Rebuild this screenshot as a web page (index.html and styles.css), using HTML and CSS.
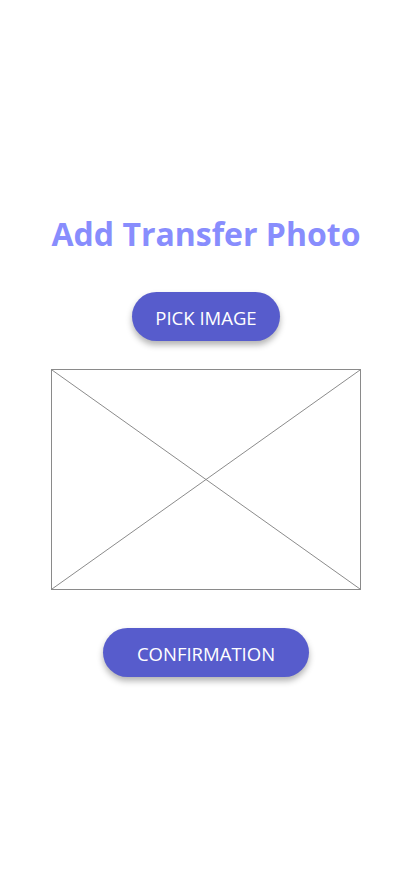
FILE: index.html
```html
<!DOCTYPE html>
<html>
<head>
<meta charset="utf-8">
<link rel="stylesheet" href="styles.css">
</head>
<body>
<main class="screen">
  <h1 class="title">Add Transfer Photo</h1>
  <button class="btn btn-pick">PICK IMAGE</button>
  <div class="placeholder">
    <svg class="cross" viewBox="0 0 310 221" preserveAspectRatio="none">
      <line x1="0" y1="0" x2="310" y2="221"/>
      <line x1="310" y1="0" x2="0" y2="221"/>
    </svg>
  </div>
  <button class="btn btn-confirm">CONFIRMATION</button>
</main>
</body>
</html>
```
FILE: styles.css
```css
html, body {
  margin: 0;
  padding: 0;
  background: #ffffff;
}
.screen {
  width: 412px;
  height: 870px;
  display: flex;
  flex-direction: column;
  align-items: center;
  font-family: "Open Sans", "Noto Sans", sans-serif;
}
.title {
  margin: 210px 0 0 0;
  font-size: 32px;
  font-weight: 700;
  line-height: 48px;
  color: #888dfd;
  letter-spacing: 0;
}
.btn {
  border: none;
  border-radius: 25px;
  background: #575ccc;
  color: #ffffff;
  font-family: "Open Sans", "Noto Sans", sans-serif;
  font-size: 18.5px;
  height: 49px;
  padding: 2px 0 0 0;
  box-shadow: 0 4px 6px rgba(0, 0, 0, 0.3);
}
.btn-pick {
  margin-top: 34px;
  width: 148px;
}
.btn-confirm {
  margin-top: 38px;
  width: 206px;
}
.placeholder {
  margin-top: 28px;
  width: 310px;
  height: 221px;
  box-sizing: border-box;
  border: 1px solid #8a8a8a;
  position: relative;
}
.cross {
  display: block;
  width: 100%;
  height: 100%;
}
.cross line {
  stroke: #8a8a8a;
  stroke-width: 1;
}
```
